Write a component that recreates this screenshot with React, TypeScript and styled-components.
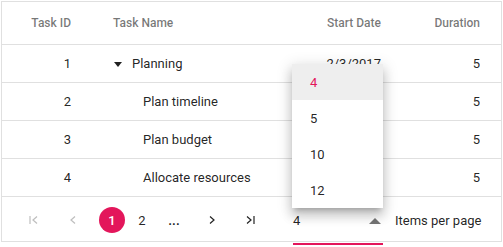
import React, { FC } from "react";
import styled, { createGlobalStyle } from "styled-components";

const GlobalStyle = createGlobalStyle`
  html, body {
    margin: 0;
    padding: 0;
    background: #fff;
    font-family: Roboto, "Segoe UI", "Liberation Sans", sans-serif;
  }
`;

interface Task {
  id: number;
  name: string;
  start?: string;
  duration: number;
  level: number;
  parent?: boolean;
}

const tasks: Task[] = [
  { id: 1, name: "Planning", start: "2/3/2017", duration: 5, level: 0, parent: true },
  { id: 2, name: "Plan timeline", start: "2/3/2017", duration: 5, level: 1 },
  { id: 3, name: "Plan budget", start: "2/3/2017", duration: 5, level: 1 },
  { id: 4, name: "Allocate resources", start: "2/3/2017", duration: 5, level: 1 },
];

const pageSizes = [4, 5, 10, 12];

const Page = styled.div`
  position: relative;
  width: 503px;
  height: 247px;
  padding: 1px;
  box-sizing: border-box;
`;

const GridBox = styled.div`
  width: 501px;
  height: 241px;
  box-sizing: border-box;
  border: 1px solid #e0e0e0;
  display: flex;
  flex-direction: column;
`;

const Row = styled.div<{ $header?: boolean }>`
  display: grid;
  grid-template-columns: 90px 210px 100px 99px;
  height: ${(p) => (p.$header ? "42px" : "37px")};
  border-bottom: 1px solid #e0e0e0;
  align-items: center;
  font-size: ${(p) => (p.$header ? "12px" : "13px")};
  color: ${(p) => (p.$header ? "rgba(0,0,0,0.54)" : "rgba(0,0,0,0.87)")};
  font-weight: ${(p) => (p.$header ? 500 : 400)};
`;

const Cell = styled.div<{ $right?: boolean; $indent?: number }>`
  padding: 0 21px 0 ${(p) => 21 + (p.$indent || 0)}px;
  white-space: nowrap;
  overflow: hidden;
  display: flex;
  align-items: center;
  justify-content: ${(p) => (p.$right ? "flex-end" : "flex-start")};
`;

const Caret = styled.span`
  display: inline-block;
  width: 0;
  height: 0;
  border-left: 4px solid transparent;
  border-right: 4px solid transparent;
  border-top: 5px solid rgba(0, 0, 0, 0.87);
  margin: 1px 10px 0 1px;
`;

const Pager = styled.div`
  flex: 1;
  display: flex;
  align-items: center;
  padding-top: 2px;
  box-sizing: border-box;
`;

const NavButton = styled.div<{ $width: number; $disabled?: boolean }>`
  width: ${(p) => p.$width}px;
  height: 26px;
  display: flex;
  align-items: center;
  justify-content: center;
  color: ${(p) => (p.$disabled ? "rgba(0,0,0,0.26)" : "rgba(0,0,0,0.87)")};
  font-size: 13px;
  flex-shrink: 0;
`;

const PageNumber = styled.div<{ $active?: boolean }>`
  width: 26px;
  height: 26px;
  border-radius: 50%;
  display: flex;
  align-items: center;
  justify-content: center;
  font-size: 13px;
  flex-shrink: 0;
  background: ${(p) => (p.$active ? "#e3165b" : "transparent")};
  color: ${(p) => (p.$active ? "#fff" : "rgba(0,0,0,0.87)")};
  font-weight: ${(p) => (p.$active ? 500 : 400)};
`;

const DropInput = styled.div`
  position: relative;
  width: 90px;
  height: 26px;
  margin-left: 30px;
  flex-shrink: 0;
  display: flex;
  align-items: center;
  justify-content: space-between;
  font-size: 13px;
  color: rgba(0, 0, 0, 0.87);
  &::after {
    content: "";
    position: absolute;
    left: 0;
    right: 0;
    bottom: -12px;
    height: 2px;
    background: #e3165b;
  }
`;

const UpArrow = styled.span`
  width: 0;
  height: 0;
  border-left: 6px solid transparent;
  border-right: 6px solid transparent;
  border-bottom: 6px solid rgba(0, 0, 0, 0.54);
  margin-right: 2px;
  margin-top: 2px;
`;

const PagerLabel = styled.div`
  margin-left: 12px;
  font-size: 13px;
  color: rgba(0, 0, 0, 0.87);
  white-space: nowrap;
`;

const Popup = styled.ul`
  position: absolute;
  left: 292px;
  top: 64px;
  width: 91px;
  margin: 0;
  padding: 0;
  list-style: none;
  background: #fff;
  box-shadow: 0 5px 5px -3px rgba(0, 0, 0, 0.2), 0 8px 10px 1px rgba(0, 0, 0, 0.14),
    0 3px 14px 2px rgba(0, 0, 0, 0.12);
`;

const PopupItem = styled.li<{ $selected?: boolean }>`
  height: 36px;
  display: flex;
  align-items: center;
  padding-left: 18px;
  font-size: 13px;
  background: ${(p) => (p.$selected ? "#eee" : "#fff")};
  color: ${(p) => (p.$selected ? "#e3165b" : "rgba(0,0,0,0.87)")};
`;

const Chevron: FC<{ dir: "left" | "right"; bar?: boolean }> = ({ dir, bar }) => (
  <svg width="12" height="12" viewBox="0 0 12 12" fill="none" stroke="currentColor" strokeWidth="1.2">
    {dir === "left" ? (
      <>
        {bar && <line x1="2" y1="2" x2="2" y2="10" />}
        <polyline points={bar ? "9,2.5 5,6 9,9.5" : "8,2.5 4,6 8,9.5"} />
      </>
    ) : (
      <>
        <polyline points={bar ? "3,2.5 7,6 3,9.5" : "4,2.5 8,6 4,9.5"} />
        {bar && <line x1="10" y1="2" x2="10" y2="10" />}
      </>
    )}
  </svg>
);

const App: FC = () => {
  return (
    <Page>
      <GlobalStyle />
      <GridBox>
        <Row $header>
          <Cell $right>Task ID</Cell>
          <Cell>Task Name</Cell>
          <Cell $right>Start Date</Cell>
          <Cell $right>Duration</Cell>
        </Row>
        {tasks.map((t) => (
          <Row key={t.id}>
            <Cell $right>{t.id}</Cell>
            <Cell $indent={t.level * 30}>
              {t.parent && <Caret />}
              {t.name}
            </Cell>
            <Cell $right>{t.start}</Cell>
            <Cell $right>{t.duration}</Cell>
          </Row>
        ))}
        <Pager>
          <NavButton $width={26} $disabled style={{ marginLeft: 19 }}>
            <Chevron dir="left" bar />
          </NavButton>
          <NavButton $width={26} $disabled style={{ marginLeft: 13 }}>
            <Chevron dir="left" />
          </NavButton>
          <PageNumber $active style={{ marginLeft: 13 }}>1</PageNumber>
          <PageNumber style={{ marginLeft: 4 }}>2</PageNumber>
          <NavButton $width={26} style={{ marginLeft: 6, fontWeight: 700 }}>
            ...
          </NavButton>
          <NavButton $width={26} style={{ marginLeft: 12 }}>
            <Chevron dir="right" />
          </NavButton>
          <NavButton $width={26} style={{ marginLeft: 12 }}>
            <Chevron dir="right" bar />
          </NavButton>
          <DropInput>
            <span>4</span>
            <UpArrow />
          </DropInput>
          <PagerLabel>Items per page</PagerLabel>
        </Pager>
      </GridBox>
      <Popup>
        {pageSizes.map((s) => (
          <PopupItem key={s} $selected={s === 4}>
            {s}
          </PopupItem>
        ))}
      </Popup>
    </Page>
  );
};

export default App;
